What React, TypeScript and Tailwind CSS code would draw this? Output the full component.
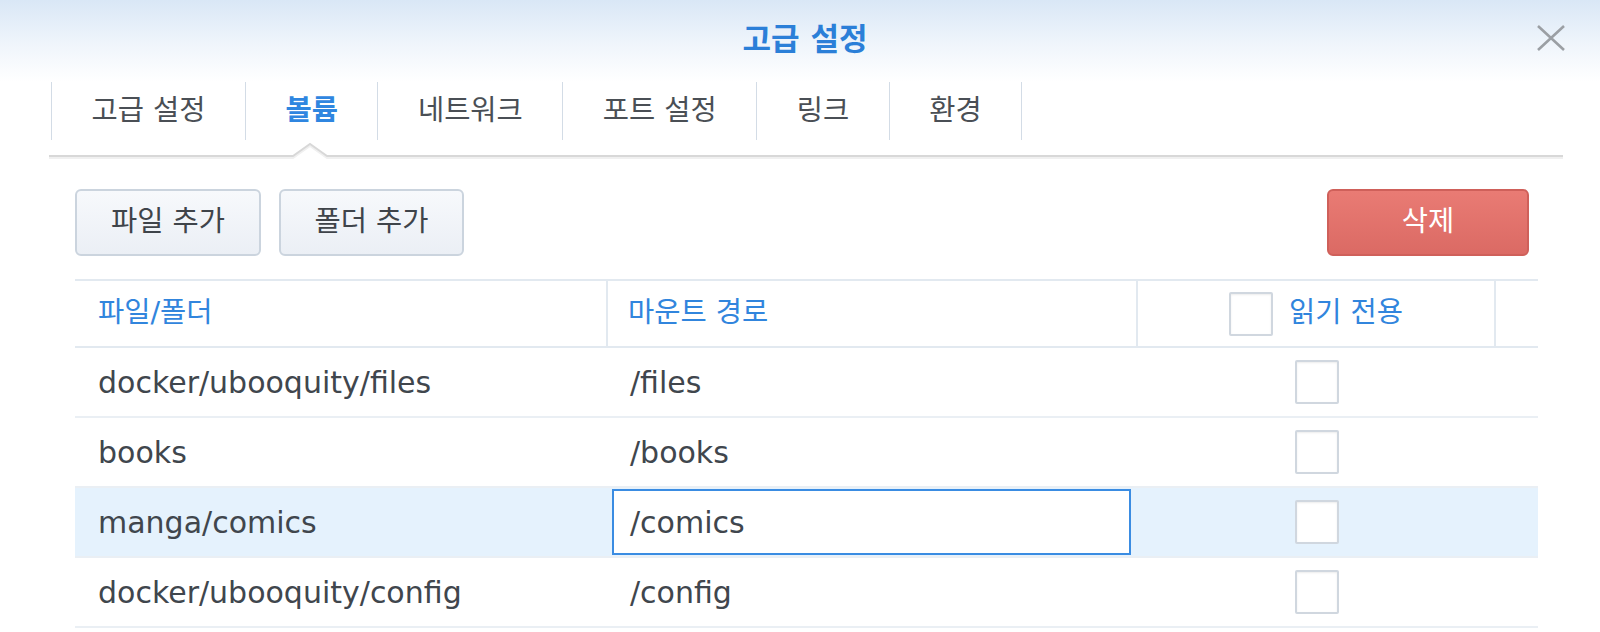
import { useState } from "react";

const tabs = ["고급 설정", "볼륨", "네트워크", "포트 설정", "링크", "환경"];

const volumes = [
  { source: "docker/ubooquity/files", mount: "/files" },
  { source: "books", mount: "/books" },
  { source: "manga/comics", mount: "/comics" },
  { source: "docker/ubooquity/config", mount: "/config" },
];

const font = "font-['DejaVu_Sans','Noto_Sans_CJK_KR',sans-serif]";

const Checkbox = () => (
  <span className="block h-[44px] w-[44px] shrink-0 rounded-[2px] border-2 border-[#d0d7df] bg-white shadow-[inset_0_1px_2px_rgba(0,0,0,0.08)]" />
);

const App = () => {
  const [activeTab] = useState(1);
  const [editing] = useState(2);

  return (
    <div className={`relative h-[632px] w-[1600px] overflow-hidden bg-white ${font}`}>
      {/* header */}
      <header className="flex h-[82px] items-start justify-center bg-gradient-to-b from-[#d9e7f6] via-[#eef4fb] to-white pl-[10px] pt-[19px]">
        <h1 className="text-[31px] font-bold leading-[40px] text-[#2b7fd8]">고급 설정</h1>
      </header>
      <button type="button" className="absolute right-[34px] top-[25px] h-[26px] w-[30px]">
        <svg viewBox="0 0 30 26" className="h-[26px] w-[30px]">
          <path d="M2 1 L28 25 M28 1 L2 25" stroke="#9b9fa4" strokeWidth="2.6" fill="none" />
        </svg>
      </button>

      {/* tabs */}
      <div className="ml-[49px] w-[1514px]">
        <nav className="ml-[2px] flex h-[58px]">
          {tabs.map((tab, index) => (
            <div
              key={tab}
              className={`flex items-center border-l border-[#d3dce6] px-[39.5px] text-[28.5px] ${
                index === tabs.length - 1 ? "border-r" : ""
              } ${index === activeTab ? "font-bold text-[#2f86e0]" : "text-[#4a4f55]"}`}
            >
              {tab}
            </div>
          ))}
        </nav>
        <svg width="1514" height="19" className="block">
          <polyline points="0,18 244,18 261,6 278,18 1514,18" stroke="#f0f0f0" strokeWidth="2" fill="none" />
          <polyline points="0,16 244,16 261,4 278,16 1514,16" stroke="#d8d8d8" strokeWidth="2" fill="none" />
        </svg>
      </div>

      {/* toolbar */}
      <div className="ml-[75px] mt-[30px] flex w-[1454px] items-center">
        <button className="h-[67px] w-[186px] rounded-[6px] border-2 border-[#cbd4de] bg-gradient-to-b from-[#f7f9fc] to-[#ebeff5] text-[28.5px] text-[#3f444a]">
          파일 추가
        </button>
        <button className="ml-[18px] h-[67px] w-[185px] rounded-[6px] border-2 border-[#cbd4de] bg-gradient-to-b from-[#f7f9fc] to-[#ebeff5] text-[28.5px] text-[#3f444a]">
          폴더 추가
        </button>
        <button className="ml-auto h-[67px] w-[202px] rounded-[6px] border-2 border-[#cf605a] bg-gradient-to-b from-[#e97b74] to-[#db6a64] text-[28.5px] text-white">
          삭제
        </button>
      </div>

      {/* table */}
      <div className="ml-[75px] mt-[23px] w-[1463px]">
        <div className="grid h-[69px] grid-cols-[533px_530px_358px_42px] border-y-2 border-[#e2e9f0] text-[28.5px] text-[#3185dd]">
          <div className="flex items-center border-r-2 border-[#e2e9f0] pl-[23px]">파일/폴더</div>
          <div className="flex items-center border-r-2 border-[#e2e9f0] pl-[20px]">마운트 경로</div>
          <div className="flex items-center justify-center gap-[16px] border-r-2 border-[#e2e9f0]">
            <Checkbox />
            <span>읽기 전용</span>
          </div>
          <div />
        </div>

        {volumes.map((volume, index) => (
          <div
            key={volume.source}
            className={`grid h-[70px] grid-cols-[533px_530px_358px_42px] border-b-2 border-[#eaeff4] text-[30px] text-[#40464d] ${
              index === editing ? "bg-[#e5f2fd]" : ""
            }`}
          >
            <div className="flex items-center pl-[23px]">{volume.source}</div>
            {index === editing ? (
              <div className="flex items-center py-[1px] pl-[4px] pr-[7px]">
                <div className="flex h-full w-full items-center border-2 border-[#3a8ce2] bg-white pl-[16px]">
                  {volume.mount}
                </div>
              </div>
            ) : (
              <div className="flex items-center pl-[22px]">{volume.mount}</div>
            )}
            <div className="flex items-center justify-center">
              <Checkbox />
            </div>
            <div />
          </div>
        ))}
      </div>
    </div>
  );
};

export default App;
